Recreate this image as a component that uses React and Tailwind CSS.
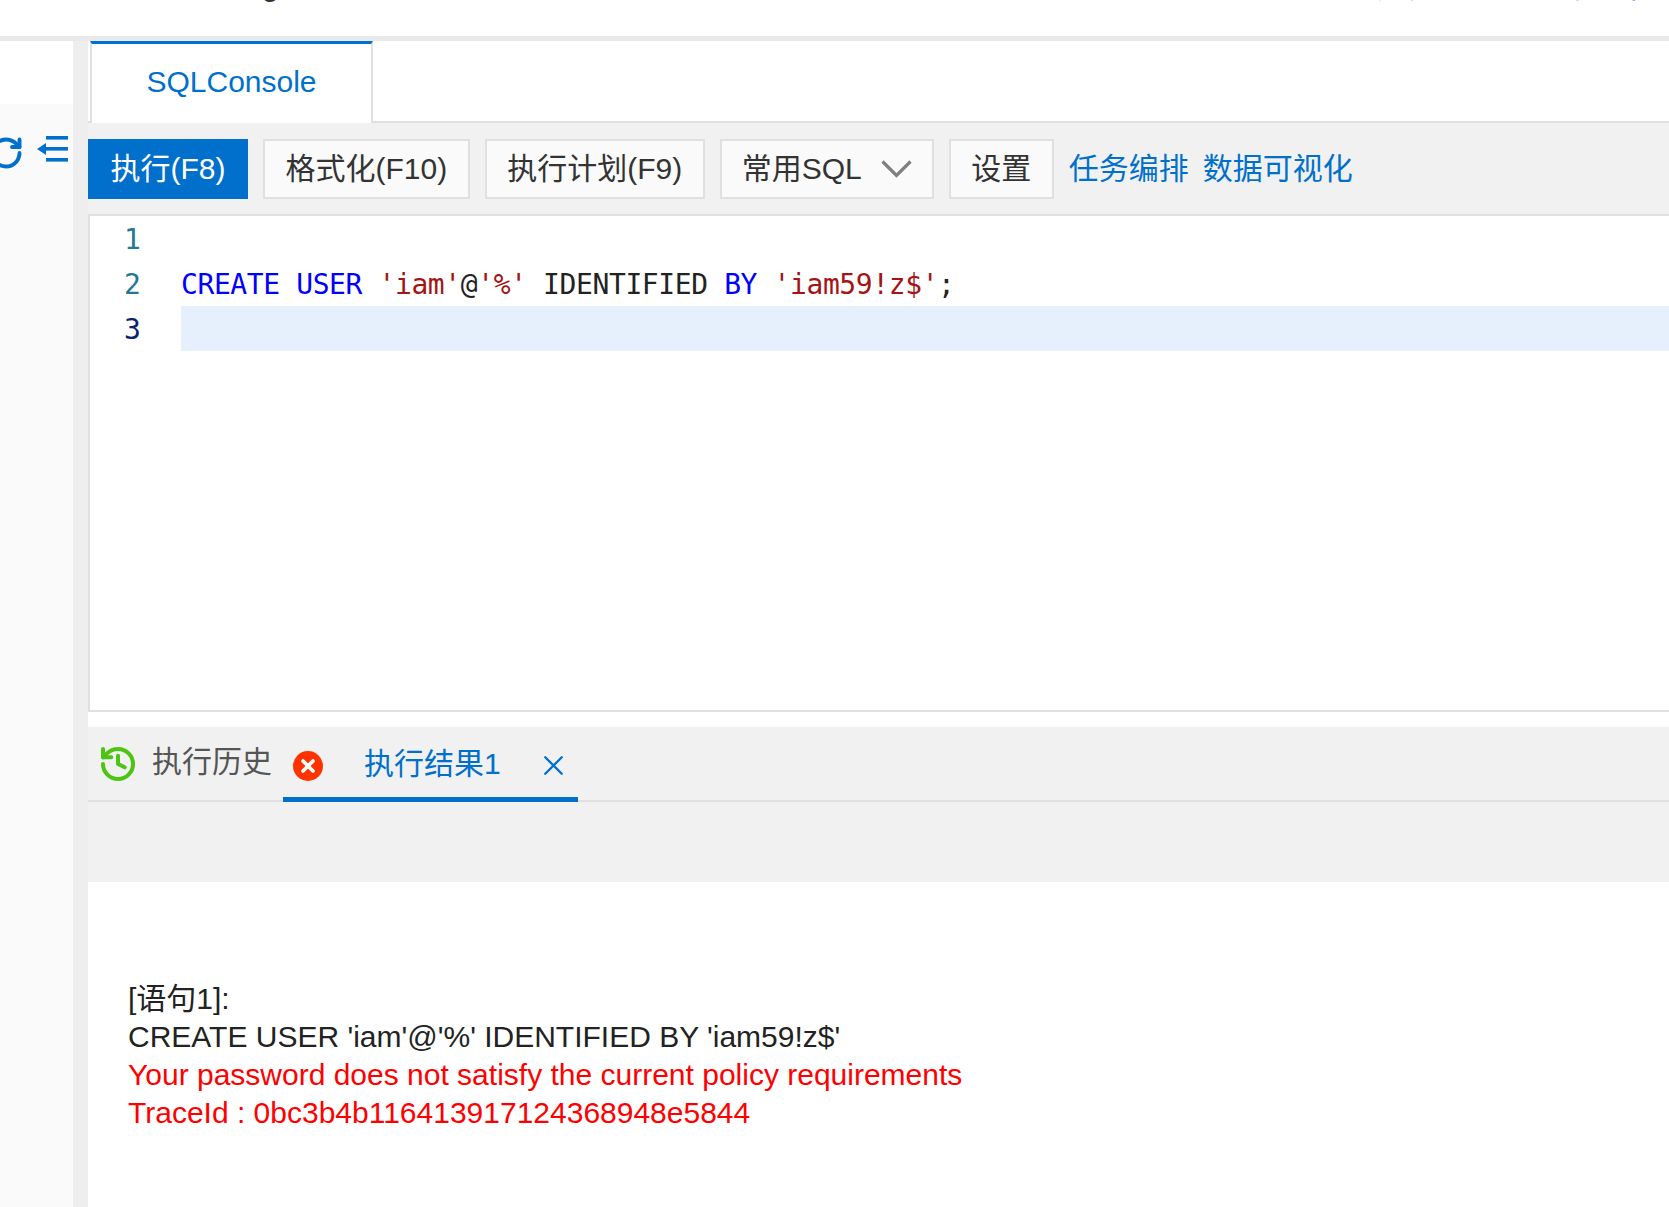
import React from 'react';
import { History, RotateCw, X } from 'lucide-react';

const sans = 'font-["Liberation_Sans","Noto_Sans_CJK_SC",sans-serif]';
const mono = 'font-["DejaVu_Sans_Mono","Liberation_Mono",monospace]';

const toolButtons = ['格式化(F10)', '执行计划(F9)'];

// 顶部栏，只露出文字最下面一点
const Header = () => (
  <header className="flex h-[36px] items-start overflow-hidden whitespace-nowrap bg-white text-[30px] leading-[30px]">
    <span className="ml-[262px] -mt-[29px] shrink-0 text-[#333]">g</span>
    <span className="ml-[1086px] -mt-[28px] shrink-0 text-[#444]">账号</span>
    <span className="ml-[97px] -mt-[28px] shrink-0 text-[#0070cc]">退出</span>
    <span className="ml-[37px] -mt-[28px] shrink-0 text-[#0070cc]">帮助</span>
  </header>
);

const Sidebar = () => (
  <aside className="flex w-[88px] shrink-0 border-r-[15px] border-[#eeeeee] bg-[#fafafa]">
    <div className="w-full">
      <div className="h-[63px] bg-white" />
      <div className="flex items-start overflow-hidden pt-[32px]">
        <RotateCw className="-ml-[12px] -mt-[1px] h-[36px] w-[36px] shrink-0 text-[#0070cc]" strokeWidth={2.6} />
        <svg className="ml-[13px] shrink-0" width="31" height="26" viewBox="0 0 31 26" fill="#0070cc">
          <path d="M0 13 L9 7 V19 Z" />
          <rect x="9" y="0" width="22" height="3.6" />
          <rect x="9" y="11" width="22" height="3.6" />
          <rect x="9" y="22" width="22" height="3.6" />
        </svg>
      </div>
    </div>
  </aside>
);

const Toolbar = () => (
  <div className="flex h-[91px] items-start gap-[15px] bg-[#f1f1f1] pt-[16px] text-[30px] leading-[40px]">
    <button className="flex h-[60px] w-[160px] items-center justify-center bg-[#0070cc] text-white">执行(F8)</button>
    {toolButtons.map((label) => (
      <button key={label} className="flex h-[60px] items-center border-[2.5px] border-[#e0e0e0] bg-[#fafafa] px-[20.5px] whitespace-nowrap text-[#333]">
        {label}
      </button>
    ))}
    <button className="flex h-[60px] w-[214px] items-center justify-between border-[2.5px] border-[#e0e0e0] bg-[#fafafa] pl-[20px] pr-[20px] text-[#333]">
      常用SQL
      <svg width="31" height="18" viewBox="0 0 31 18" fill="none" stroke="#808080" strokeWidth="3.2">
        <polyline points="1.5,1.5 15.5,15.5 29.5,1.5" />
      </svg>
    </button>
    <button className="flex h-[60px] w-[105px] items-center justify-center border-[2.5px] border-[#e0e0e0] bg-[#fafafa] text-[#333]">设置</button>
    <div className="flex h-[60px] items-center gap-[14px] text-[#0070cc]">
      <span>任务编排</span>
      <span>数据可视化</span>
    </div>
  </div>
);

const Editor = () => (
  <div className={`h-[498px] border-2 border-r-0 border-[#e0e0e0] bg-white text-[28px] leading-[45px] tracking-[-0.4px] ${mono}`}>
    <div className="flex h-[45px]">
      <span className="w-[91px] pl-[34px] pt-[1px] text-[#237893]">1</span>
    </div>
    <div className="flex h-[45px]">
      <span className="w-[91px] pl-[34px] pt-[1px] text-[#237893]">2</span>
      <span className="whitespace-pre pt-[1px]">
        <span className="text-[#0000ff]">CREATE USER </span>
        <span className="text-[#a31515]">'iam'</span>
        <span className="text-[#222]">@</span>
        <span className="text-[#a31515]">'%'</span>
        <span className="text-[#222]"> IDENTIFIED </span>
        <span className="text-[#0000ff]">BY </span>
        <span className="text-[#a31515]">'iam59!z$'</span>
        <span className="text-[#222]">;</span>
      </span>
    </div>
    <div className="flex h-[45px]">
      <span className="w-[91px] pl-[34px] pt-[1px] text-[#0b216f]">3</span>
      <div className="flex-1 bg-[#e6f0fc]" />
    </div>
  </div>
);

const ResultTabs = () => (
  <div className="mt-[15px] h-[155px] bg-[#f1f1f1] text-[30px]">
    <div className="flex h-[75px] items-start border-b-2 border-[#e0e0e0]">
      <History className="ml-[10px] mt-[17px] h-[40px] w-[40px] text-[#4cc413]" strokeWidth={2.4} />
      <span className="ml-[14px] mt-[15px] shrink-0 leading-[40px] text-[#555]">执行历史</span>
      <span className="ml-[21px] mt-[24px] flex h-[30px] w-[30px] shrink-0 items-center justify-center rounded-full bg-[#ff3300]">
        <X className="h-[20px] w-[20px] text-white" strokeWidth={4.4} />
      </span>
      <div className="-ml-[40px] flex h-[75px] w-[295px] shrink-0 items-start border-b-[5px] border-[#0070cc] pl-[81px] text-[#0070cc]">
        <span className="mt-[17px] shrink-0 leading-[40px]">执行结果1</span>
        <X className="ml-[36px] mt-[22px] h-[33px] w-[33px] shrink-0" strokeWidth={1.7} />
      </div>
    </div>
  </div>
);

const ResultOutput = () => (
  <div className="pl-[40px] pt-[98px] text-[30px] leading-[38px] text-[#222]">
    <p>[语句1]:</p>
    <p>CREATE USER 'iam'@'%' IDENTIFIED BY 'iam59!z$'</p>
    <p className="text-[#ff0000]">Your password does not satisfy the current policy requirements</p>
    <p className="text-[#ff0000]">TraceId : 0bc3b4b116413917124368948e5844</p>
  </div>
);

export default function App() {
  return (
    <div className={`flex h-screen w-full flex-col overflow-hidden bg-white ${sans}`}>
      <Header />
      <div className="h-[5px] bg-[#e9e9e9]" />
      <div className="flex min-h-0 flex-1">
        <Sidebar />
        <main className="min-w-0 flex-1 bg-white">
          <div className="flex h-[82px] border-b-2 border-[#e0e0e0] bg-white">
            <div className="-mb-[2px] ml-[2px] flex h-[82px] w-[283px] items-center justify-center border-x-2 border-t-[3px] border-x-[#e0e0e0] border-t-[#0070cc] bg-white pb-[4px] text-[30px] text-[#0070cc]">
              SQLConsole
            </div>
          </div>
          <Toolbar />
          <Editor />
          <div className="bg-[#eeeeee]">
            <ResultTabs />
          </div>
          <ResultOutput />
        </main>
      </div>
    </div>
  );
}
